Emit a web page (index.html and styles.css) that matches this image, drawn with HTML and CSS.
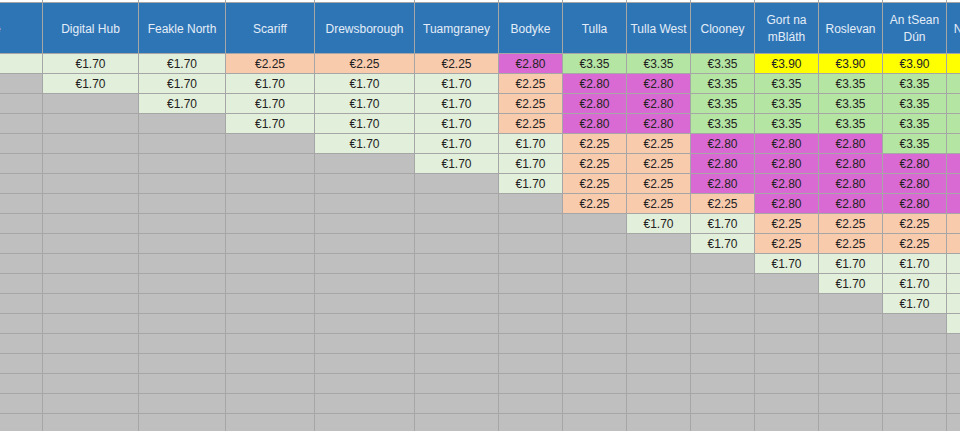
FILE: index.html
```html
<!DOCTYPE html>
<html lang="en">
<head>
<meta charset="utf-8">
<title>Fare Table</title>
<link rel="stylesheet" href="styles.css">
</head>
<body>
<div class="sheet">
<table class="fares">
<colgroup>
<col class="c0"><col class="c-dh"><col class="c-fn"><col class="c-sc"><col class="c-dr"><col class="c-tu"><col class="c64"><col class="c64"><col class="c64"><col class="c64"><col class="c64"><col class="c64"><col class="c64"><col class="c64">
</colgroup>
<tr class="top"><td></td><td></td><td></td><td></td><td></td><td></td><td></td><td></td><td></td><td></td><td></td><td></td><td></td><td></td></tr>
<tr class="head">
<th>Fare Stage</th><th>Digital Hub</th><th>Feakle North</th><th>Scariff</th><th>Drewsborough</th><th>Tuamgraney</th><th>Bodyke</th><th>Tulla</th><th>Tulla West</th><th>Clooney</th><th>Gort na<br>mBláth</th><th>Roslevan</th><th>An tSean<br>Dún</th><th>Newtown</th>
</tr>
<tr><td class="lg"></td><td class="lg">€1.70</td><td class="lg">€1.70</td><td class="pe">€2.25</td><td class="pe">€2.25</td><td class="pe">€2.25</td><td class="mg">€2.80</td><td class="gr">€3.35</td><td class="gr">€3.35</td><td class="gr">€3.35</td><td class="ye">€3.90</td><td class="ye">€3.90</td><td class="ye">€3.90</td><td class="ye">€3.90</td></tr>
<tr><td class="gy"></td><td class="lg">€1.70</td><td class="lg">€1.70</td><td class="lg">€1.70</td><td class="lg">€1.70</td><td class="lg">€1.70</td><td class="pe">€2.25</td><td class="mg">€2.80</td><td class="mg">€2.80</td><td class="gr">€3.35</td><td class="gr">€3.35</td><td class="gr">€3.35</td><td class="gr">€3.35</td><td class="gr">€3.35</td></tr>
<tr><td class="gy"></td><td class="gy"></td><td class="lg">€1.70</td><td class="lg">€1.70</td><td class="lg">€1.70</td><td class="lg">€1.70</td><td class="pe">€2.25</td><td class="mg">€2.80</td><td class="mg">€2.80</td><td class="gr">€3.35</td><td class="gr">€3.35</td><td class="gr">€3.35</td><td class="gr">€3.35</td><td class="gr">€3.35</td></tr>
<tr><td class="gy"></td><td class="gy"></td><td class="gy"></td><td class="lg">€1.70</td><td class="lg">€1.70</td><td class="lg">€1.70</td><td class="pe">€2.25</td><td class="mg">€2.80</td><td class="mg">€2.80</td><td class="gr">€3.35</td><td class="gr">€3.35</td><td class="gr">€3.35</td><td class="gr">€3.35</td><td class="gr">€3.35</td></tr>
<tr><td class="gy"></td><td class="gy"></td><td class="gy"></td><td class="gy"></td><td class="lg">€1.70</td><td class="lg">€1.70</td><td class="lg">€1.70</td><td class="pe">€2.25</td><td class="pe">€2.25</td><td class="mg">€2.80</td><td class="mg">€2.80</td><td class="mg">€2.80</td><td class="gr">€3.35</td><td class="gr">€3.35</td></tr>
<tr><td class="gy"></td><td class="gy"></td><td class="gy"></td><td class="gy"></td><td class="gy"></td><td class="lg">€1.70</td><td class="lg">€1.70</td><td class="pe">€2.25</td><td class="pe">€2.25</td><td class="mg">€2.80</td><td class="mg">€2.80</td><td class="mg">€2.80</td><td class="mg">€2.80</td><td class="mg">€2.80</td></tr>
<tr><td class="gy"></td><td class="gy"></td><td class="gy"></td><td class="gy"></td><td class="gy"></td><td class="gy"></td><td class="lg">€1.70</td><td class="pe">€2.25</td><td class="pe">€2.25</td><td class="mg">€2.80</td><td class="mg">€2.80</td><td class="mg">€2.80</td><td class="mg">€2.80</td><td class="mg">€2.80</td></tr>
<tr><td class="gy"></td><td class="gy"></td><td class="gy"></td><td class="gy"></td><td class="gy"></td><td class="gy"></td><td class="gy"></td><td class="pe">€2.25</td><td class="pe">€2.25</td><td class="pe">€2.25</td><td class="mg">€2.80</td><td class="mg">€2.80</td><td class="mg">€2.80</td><td class="mg">€2.80</td></tr>
<tr><td class="gy"></td><td class="gy"></td><td class="gy"></td><td class="gy"></td><td class="gy"></td><td class="gy"></td><td class="gy"></td><td class="gy"></td><td class="lg">€1.70</td><td class="lg">€1.70</td><td class="pe">€2.25</td><td class="pe">€2.25</td><td class="pe">€2.25</td><td class="pe">€2.25</td></tr>
<tr><td class="gy"></td><td class="gy"></td><td class="gy"></td><td class="gy"></td><td class="gy"></td><td class="gy"></td><td class="gy"></td><td class="gy"></td><td class="gy"></td><td class="lg">€1.70</td><td class="pe">€2.25</td><td class="pe">€2.25</td><td class="pe">€2.25</td><td class="pe">€2.25</td></tr>
<tr><td class="gy"></td><td class="gy"></td><td class="gy"></td><td class="gy"></td><td class="gy"></td><td class="gy"></td><td class="gy"></td><td class="gy"></td><td class="gy"></td><td class="gy"></td><td class="lg">€1.70</td><td class="lg">€1.70</td><td class="lg">€1.70</td><td class="lg">€1.70</td></tr>
<tr><td class="gy"></td><td class="gy"></td><td class="gy"></td><td class="gy"></td><td class="gy"></td><td class="gy"></td><td class="gy"></td><td class="gy"></td><td class="gy"></td><td class="gy"></td><td class="gy"></td><td class="lg">€1.70</td><td class="lg">€1.70</td><td class="lg">€1.70</td></tr>
<tr><td class="gy"></td><td class="gy"></td><td class="gy"></td><td class="gy"></td><td class="gy"></td><td class="gy"></td><td class="gy"></td><td class="gy"></td><td class="gy"></td><td class="gy"></td><td class="gy"></td><td class="gy"></td><td class="lg">€1.70</td><td class="lg">€1.70</td></tr>
<tr><td class="gy"></td><td class="gy"></td><td class="gy"></td><td class="gy"></td><td class="gy"></td><td class="gy"></td><td class="gy"></td><td class="gy"></td><td class="gy"></td><td class="gy"></td><td class="gy"></td><td class="gy"></td><td class="gy"></td><td class="lg">€1.70</td></tr>
<tr><td class="gy"></td><td class="gy"></td><td class="gy"></td><td class="gy"></td><td class="gy"></td><td class="gy"></td><td class="gy"></td><td class="gy"></td><td class="gy"></td><td class="gy"></td><td class="gy"></td><td class="gy"></td><td class="gy"></td><td class="gy"></td></tr>
<tr><td class="gy"></td><td class="gy"></td><td class="gy"></td><td class="gy"></td><td class="gy"></td><td class="gy"></td><td class="gy"></td><td class="gy"></td><td class="gy"></td><td class="gy"></td><td class="gy"></td><td class="gy"></td><td class="gy"></td><td class="gy"></td></tr>
<tr><td class="gy"></td><td class="gy"></td><td class="gy"></td><td class="gy"></td><td class="gy"></td><td class="gy"></td><td class="gy"></td><td class="gy"></td><td class="gy"></td><td class="gy"></td><td class="gy"></td><td class="gy"></td><td class="gy"></td><td class="gy"></td></tr>
<tr><td class="gy"></td><td class="gy"></td><td class="gy"></td><td class="gy"></td><td class="gy"></td><td class="gy"></td><td class="gy"></td><td class="gy"></td><td class="gy"></td><td class="gy"></td><td class="gy"></td><td class="gy"></td><td class="gy"></td><td class="gy"></td></tr>
<tr><td class="gy"></td><td class="gy"></td><td class="gy"></td><td class="gy"></td><td class="gy"></td><td class="gy"></td><td class="gy"></td><td class="gy"></td><td class="gy"></td><td class="gy"></td><td class="gy"></td><td class="gy"></td><td class="gy"></td><td class="gy"></td></tr>
</table>
</div>
</body>
</html>
```
FILE: styles.css
```css
html, body {
  margin: 0;
  padding: 0;
  background: #ffffff;
}
.sheet {
  width: 960px;
  height: 431px;
  overflow: hidden;
}
.fares {
  table-layout: fixed;
  border-collapse: collapse;
  width: 1074px;
  margin-left: -101px;
  font-family: "Liberation Sans", Arial, sans-serif;
  font-size: 12px;
  color: #222222;
}
.c0 { width: 143px; }
.c-dh { width: 96px; }
.c-fn { width: 87px; }
.c-sc { width: 89px; }
.c-dr { width: 100px; }
.c-tu { width: 84px; }
.c64 { width: 64px; }
.fares td, .fares th {
  border: 1px solid #a6a6a6;
  padding: 0;
  text-align: center;
  white-space: nowrap;
  overflow: hidden;
}
.fares td {
  height: 18px;
  line-height: 18px;
  padding-top: 1px;
}
.top td {
  height: 2px;
  line-height: 2px;
  padding-top: 0;
  border-top: none;
  background: #ffffff;
}
.head th {
  height: 48px;
  background: #2e75b6;
  color: #e4edf7;
  font-weight: normal;
  line-height: 17px;
  padding-top: 2px;
}
.lg { background: #e2efda; }
.pe { background: #f8cbad; }
.mg { background: #da6ad3; }
.gr { background: #b4e5a2; }
.ye { background: #ffff00; }
.gy { background: #bfbfbf; }
```
